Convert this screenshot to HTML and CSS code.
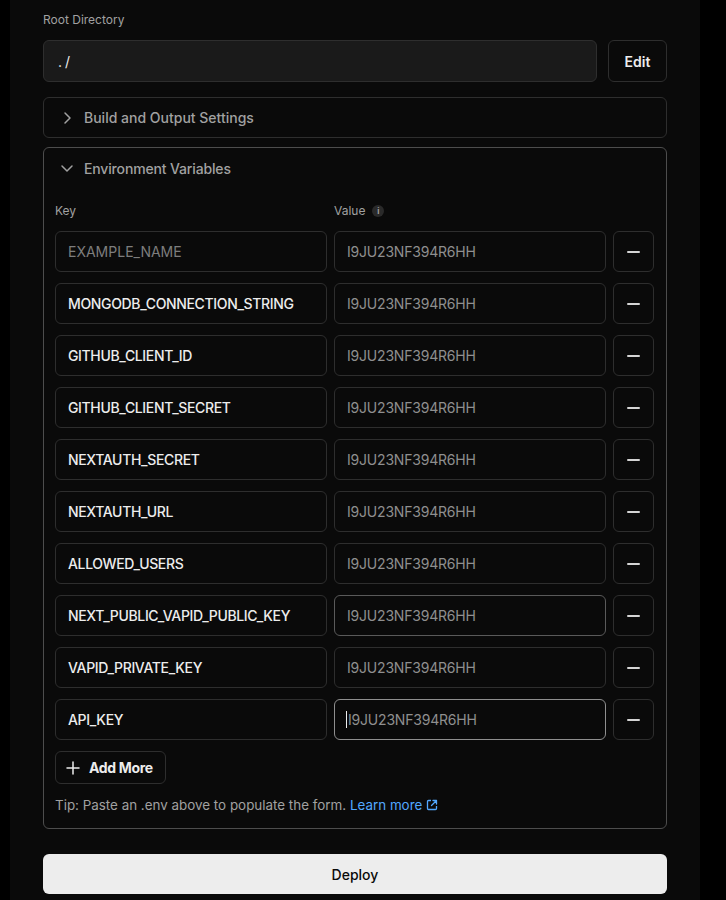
FILE: index.html
```html
<!DOCTYPE html>
<html>
<head>
<meta charset="utf-8">
<link rel="stylesheet" href="styles.css">
</head>
<body>
<div class="panel">
  <div class="field-label">Root Directory</div>
  <div class="root-row">
    <div class="root-input">./</div>
    <button class="edit-btn">Edit</button>
  </div>

  <div class="collapse">
    <svg class="chev" width="16" height="16" viewBox="0 0 16 16"><path d="M6 3l5 5-5 5" fill="none" stroke="#a1a1a1" stroke-width="1.5" stroke-linecap="round" stroke-linejoin="round"/></svg>
    <span>Build and Output Settings</span>
  </div>

  <div class="env">
    <div class="env-head">
      <svg class="chev" width="16" height="16" viewBox="0 0 16 16"><path d="M3 6l5 5 5-5" fill="none" stroke="#a1a1a1" stroke-width="1.5" stroke-linecap="round" stroke-linejoin="round"/></svg>
      <span>Environment Variables</span>
    </div>
    <div class="env-body">
      <div class="grid labels">
        <div class="col-label">Key</div>
        <div class="col-label">Value <span class="info">i</span></div>
        <div></div>
      </div>
      <div class="rows">
        <div class="grid"><div class="inp key ph">EXAMPLE_NAME</div><div class="inp val">I9JU23NF394R6HH</div><button class="minus"><span></span></button></div>
        <div class="grid"><div class="inp key">MONGODB_CONNECTION_STRING</div><div class="inp val">I9JU23NF394R6HH</div><button class="minus"><span></span></button></div>
        <div class="grid"><div class="inp key">GITHUB_CLIENT_ID</div><div class="inp val">I9JU23NF394R6HH</div><button class="minus"><span></span></button></div>
        <div class="grid"><div class="inp key">GITHUB_CLIENT_SECRET</div><div class="inp val">I9JU23NF394R6HH</div><button class="minus"><span></span></button></div>
        <div class="grid"><div class="inp key">NEXTAUTH_SECRET</div><div class="inp val">I9JU23NF394R6HH</div><button class="minus"><span></span></button></div>
        <div class="grid"><div class="inp key">NEXTAUTH_URL</div><div class="inp val">I9JU23NF394R6HH</div><button class="minus"><span></span></button></div>
        <div class="grid"><div class="inp key">ALLOWED_USERS</div><div class="inp val">I9JU23NF394R6HH</div><button class="minus"><span></span></button></div>
        <div class="grid"><div class="inp key">NEXT_PUBLIC_VAPID_PUBLIC_KEY</div><div class="inp val hover">I9JU23NF394R6HH</div><button class="minus"><span></span></button></div>
        <div class="grid"><div class="inp key">VAPID_PRIVATE_KEY</div><div class="inp val">I9JU23NF394R6HH</div><button class="minus"><span></span></button></div>
        <div class="grid"><div class="inp key">API_KEY</div><div class="inp val focus"><span class="caret"></span>I9JU23NF394R6HH</div><button class="minus"><span></span></button></div>
      </div>
      <button class="add-btn">
        <svg width="16" height="16" viewBox="0 0 16 16"><path d="M8 2v12M2 8h12" stroke="#ededed" stroke-width="1.5" stroke-linecap="round"/></svg>
        <span>Add More</span>
      </button>
      <div class="tip">Tip: Paste an .env above to populate the form. <a class="learn">Learn more <svg width="12" height="12" viewBox="0 0 12 12"><path d="M5 1.5H2.5a1 1 0 0 0-1 1v7a1 1 0 0 0 1 1h7a1 1 0 0 0 1-1V7" fill="none" stroke="#52a8ff" stroke-width="1.3"/><path d="M7 1.5h3.5V5M10.5 1.5L5.5 6.5" fill="none" stroke="#52a8ff" stroke-width="1.3" stroke-linecap="round" stroke-linejoin="round"/></svg></a></div>
    </div>
  </div>

  <button class="deploy">Deploy</button>
</div>
</body>
</html>
```
FILE: styles.css
```css
* { box-sizing: border-box; }
html, body { margin: 0; padding: 0; background: #000; }
body {
  font-family: Inter, "Noto Sans", "Liberation Sans", sans-serif;
  color: #ededed;
  font-size: 14px;
}
button { font-family: inherit; cursor: pointer; }
.panel {
  margin-left: 10px;
  width: 690px;
  min-height: 900px;
  background: #0a0a0a;
  padding: 12px 33px 0 33px;
}
.field-label {
  font-size: 12px;
  line-height: 16px;
  color: #a1a1a1;
  margin-bottom: 12px;
}
.root-row {
  display: flex;
  gap: 11px;
}
.root-input {
  flex: 1;
  height: 42px;
  background: #1a1a1a;
  border: 1px solid #2e2e2e;
  border-radius: 6px;
  padding: 0 14px;
  display: flex;
  align-items: center;
  font-size: 14px;
  letter-spacing: 3px;
  color: #ededed;
}
.edit-btn {
  width: 59px;
  height: 42px;
  background: #0a0a0a;
  border: 1px solid #2e2e2e;
  border-radius: 6px;
  color: #ededed;
  font-size: 14px;
  font-weight: 600;
}
.collapse {
  margin-top: 15px;
  height: 41px;
  border: 1px solid #2e2e2e;
  border-radius: 6px;
  display: flex;
  align-items: center;
  padding-left: 15px;
  gap: 9px;
  color: #a1a1a1;
  font-weight: 500;
  font-size: 14px;
}
.chev { flex: none; }
.env {
  margin-top: 9px;
  border: 1px solid #4d4d4d;
  border-radius: 6px;
}
.env-head {
  height: 40px;
  display: flex;
  align-items: center;
  padding-left: 15px;
  gap: 9px;
  color: #a1a1a1;
  font-weight: 500;
  font-size: 14px;
  letter-spacing: -0.15px;
}
.env-body {
  padding: 15px 11px 13px 11px;
}
.grid {
  display: grid;
  grid-template-columns: 272px 272px 41px;
  gap: 7px;
}
.labels { margin-bottom: 12px; }
.col-label {
  font-size: 12px;
  line-height: 16px;
  color: #a1a1a1;
  display: flex;
  align-items: center;
  gap: 7px;
}
.info {
  width: 12px;
  height: 12px;
  border-radius: 50%;
  background: #2a2a2a;
  color: #a1a1a1;
  font-size: 8px;
  font-weight: 700;
  display: inline-flex;
  align-items: center;
  justify-content: center;
  line-height: 1;
}
.rows {
  display: flex;
  flex-direction: column;
  gap: 11px;
}
.inp {
  height: 41px;
  border: 1px solid #2e2e2e;
  border-radius: 6px;
  background: #0a0a0a;
  display: flex;
  align-items: center;
  padding: 0 12px;
  font-size: 14px;
  white-space: nowrap;
  overflow: hidden;
  position: relative;
}
.key { color: #ededed; font-weight: 500; letter-spacing: -0.35px; }
.key.ph { color: #7d7d7d; font-weight: 400; letter-spacing: 0; }
.val { color: #8f8f8f; letter-spacing: -0.2px; }
.val.hover { border-color: #5a5a5a; }
.val.focus { border-color: #8f8f8f; }
.caret {
  display: inline-block;
  width: 1px;
  height: 17px;
  background: #ededed;
  margin-right: 1px;
  margin-left: -1px;
}
.minus {
  height: 41px;
  border: 1px solid #2e2e2e;
  border-radius: 6px;
  background: #0a0a0a;
  display: flex;
  align-items: center;
  justify-content: center;
  padding: 0;
}
.minus span {
  width: 13px;
  height: 2px;
  background: #d4d4d4;
  border-radius: 1px;
}
.add-btn {
  margin-top: 11px;
  height: 33px;
  padding: 0 12px 0 9px;
  border: 1px solid #2e2e2e;
  border-radius: 6px;
  background: #0a0a0a;
  color: #ededed;
  display: inline-flex;
  align-items: center;
  gap: 8px;
  font-size: 14px;
  font-weight: 700;
  letter-spacing: -0.35px;
}
.tip {
  margin-top: 11px;
  font-size: 13.4px;
  line-height: 20px;
  color: #a1a1a1;
}
.learn {
  color: #52a8ff;
  display: inline-flex;
  align-items: center;
  gap: 4px;
}
.deploy {
  display: block;
  width: 100%;
  margin-top: 25px;
  height: 40px;
  background: #ededed;
  border: none;
  border-radius: 6px;
  color: #0a0a0a;
  font-size: 14px;
  font-weight: 500;
}
```
